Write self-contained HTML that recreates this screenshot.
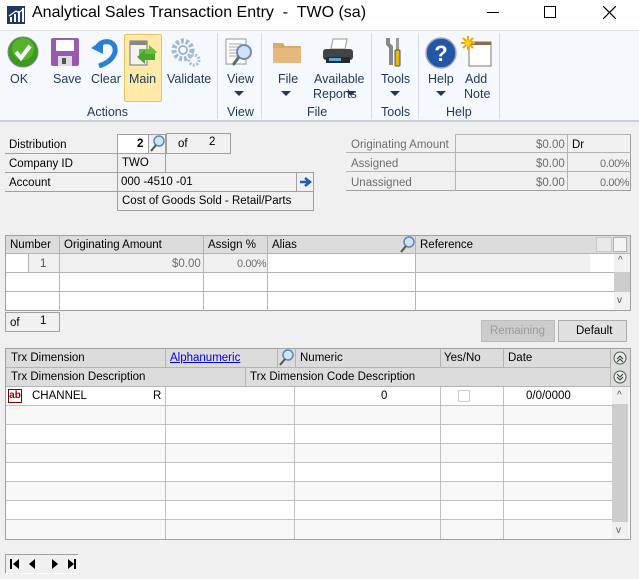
<!DOCTYPE html>
<html><head><meta charset="utf-8"><style>
*{box-sizing:border-box;margin:0;padding:0}
body{width:639px;height:579px;position:relative;overflow:hidden;background:#f0f0f0;font-family:"Liberation Sans",sans-serif;font-size:11.5px;color:#000}
.a{position:absolute}
.t{position:absolute;white-space:nowrap;margin-top:1px}
.b{position:absolute;border:1px solid #a0a0a0}
.rl{font-size:12.5px;color:#1e395b;text-align:center;margin-top:0}
.arr{position:absolute;width:0;height:0;border-left:5px solid transparent;border-right:5px solid transparent;border-top:5px solid #1e395b}
.hd{background:#dcdcdc}
.gl{position:absolute;background:#b4b4b4}
.pc{letter-spacing:-0.4px;font-size:11px}
</style></head><body>
<div class="a" style="left:0;top:0;width:639px;height:30px;background:#fff"></div>
<svg class="a" style="left:7px;top:6px" width="18" height="18"><rect width="18" height="18" fill="#1f3864"/><rect x="3" y="11" width="2" height="5" fill="#fff"/><rect x="7" y="8" width="2" height="8" fill="#fff"/><rect x="11" y="5" width="2" height="11" fill="#fff"/><rect x="15" y="2" width="2" height="14" fill="#fff"/><path d="M2 10 L9 5 L12 7 L17 2" stroke="#fff" stroke-width="1.2" fill="none"/></svg>
<div class="t" style="left:32px;top:4px;font-size:16px;color:#000;margin-top:0">Analytical Sales Transaction Entry&nbsp; -&nbsp; TWO (sa)</div>
<div class="a" style="left:487px;top:12px;width:12px;height:1px;background:#000"></div>
<div class="a" style="left:544px;top:6px;width:12px;height:12px;border:1px solid #000"></div>
<svg class="a" style="left:603px;top:6px" width="13" height="13"><path d="M0 0L13 13M13 0L0 13" stroke="#000" stroke-width="1.2"/></svg>
<div class="a" style="left:0;top:30px;width:639px;height:92px;background:#f5f8fc;border-top:1px solid #dde3ea;border-bottom:2px solid #c9d1da"></div>
<div class="a" style="left:124px;top:34px;width:38px;height:68px;background:#fde9a8;border:1px solid #e8c466;border-radius:2px"></div>
<div class="a" style="left:217px;top:33px;width:1px;height:86px;background:#d5dbe3"></div>
<div class="a" style="left:261px;top:33px;width:1px;height:86px;background:#d5dbe3"></div>
<div class="a" style="left:371px;top:33px;width:1px;height:86px;background:#d5dbe3"></div>
<div class="a" style="left:418px;top:33px;width:1px;height:86px;background:#d5dbe3"></div>
<div class="a" style="left:499px;top:33px;width:1px;height:86px;background:#d5dbe3"></div>
<svg class="a" style="left:7px;top:36px" width="32" height="32"><circle cx="16" cy="16" r="15" fill="#3a9a1c" stroke="#888" stroke-width="1"/><circle cx="16" cy="13" r="11" fill="#6cc437" opacity=".6"/><path d="M9 16l5 6 9-12" stroke="#fff" stroke-width="4" fill="none"/></svg>
<svg class="a" style="left:50px;top:37px" width="30" height="30"><rect x="1" y="1" width="28" height="28" rx="2" fill="#9a59b5"/><rect x="6" y="3" width="18" height="11" fill="#fff"/><rect x="8" y="19" width="14" height="10" fill="#ddd"/><rect x="12" y="21" width="4" height="6" fill="#555"/></svg>
<svg class="a" style="left:91px;top:36px" width="28" height="32"><path d="M6 12 C10 2 26 4 24 16 C22 24 14 28 8 30" stroke="#2a7fd4" stroke-width="5" fill="none"/><path d="M0 12 L12 4 L12 18Z" fill="#2a7fd4"/></svg>
<svg class="a" style="left:129px;top:37px" width="32" height="30"><rect x="1" y="4" width="17" height="24" fill="#f2f2f2" stroke="#777"/><rect x="1" y="4" width="17" height="4" fill="#888"/><path d="M10 12h10v-4l8 7-8 7v-4h-10z" fill="#6bbd3c"/><path d="M26 17h-10v-4l-8 7 8 7v-4h10z" fill="#4aa52a"/></svg>
<svg class="a" style="left:170px;top:37px" width="32" height="30"><circle cx="13" cy="13" r="9" fill="none" stroke="#9fb8d6" stroke-width="5" stroke-dasharray="3 2"/><circle cx="13" cy="13" r="4" fill="#fff" stroke="#9fb8d6" stroke-width="2"/><circle cx="24" cy="23" r="5" fill="none" stroke="#a8bcd3" stroke-width="3" stroke-dasharray="2 1.5"/></svg>
<svg class="a" style="left:224px;top:36px" width="32" height="32"><rect x="2" y="3" width="20" height="25" fill="#fff" stroke="#999"/><path d="M5 8h13M5 11h13M5 14h13M5 17h10M5 20h10" stroke="#aaa"/><circle cx="20" cy="16" r="7" fill="#cfe2f5" stroke="#6b8db5" stroke-width="2"/><path d="M15 21l-6 8" stroke="#666" stroke-width="3"/></svg>
<svg class="a" style="left:272px;top:40px" width="30" height="24"><path d="M1 3h10l2 3h16v17H1z" fill="#d9a96a"/><rect x="1" y="8" width="28" height="15" fill="#e5b97c"/></svg>
<svg class="a" style="left:320px;top:37px" width="36" height="30"><path d="M13 2h14l-2 10H11z" fill="#fff" stroke="#999"/><rect x="3" y="12" width="30" height="11" rx="3" fill="#444"/><rect x="6" y="20" width="24" height="6" fill="#2a2a2a"/><rect x="9" y="21" width="12" height="3" fill="#58a8e0"/></svg>
<svg class="a" style="left:384px;top:36px" width="22" height="32"><path d="M4 2v6l3 3v18" stroke="#888" stroke-width="4" fill="none"/><rect x="12" y="2" width="3" height="12" fill="#999"/><rect x="11" y="14" width="5" height="16" rx="1" fill="#e6b800" stroke="#555"/></svg>
<svg class="a" style="left:425px;top:37px" width="32" height="32"><circle cx="16" cy="16" r="15" fill="#2456a8" stroke="#aab" stroke-width="1.5"/><text x="16" y="24" font-family="Liberation Sans" font-size="22" font-weight="bold" fill="#fff" text-anchor="middle">?</text></svg>
<svg class="a" style="left:461px;top:36px" width="32" height="32"><rect x="8" y="6" width="22" height="24" fill="#fff" stroke="#8b7765"/><rect x="8" y="6" width="22" height="3" fill="#8b6a4f"/><path d="M7 0v14M0 7h14M2 2l10 10M12 2L2 12" stroke="#f5a300" stroke-width="2"/><circle cx="7" cy="7" r="3" fill="#ffd200"/></svg>
<div class="t rl" style="left:10px;top:72px">OK</div>
<div class="t rl" style="left:53px;top:72px">Save</div>
<div class="t rl" style="left:91px;top:72px">Clear</div>
<div class="t rl" style="left:129px;top:72px">Main</div>
<div class="t rl" style="left:167px;top:72px">Validate</div>
<div class="t rl" style="left:227px;top:72px">View</div>
<div class="arr" style="left:234px;top:91px"></div>
<div class="t rl" style="left:278px;top:72px">File</div>
<div class="arr" style="left:281px;top:91px"></div>
<div class="t rl" style="left:314px;top:72px">Available</div>
<div class="t rl" style="left:313px;top:87px">Reports</div>
<div class="arr" style="left:346px;top:91px"></div>
<div class="t rl" style="left:381px;top:72px">Tools</div>
<div class="arr" style="left:390px;top:91px"></div>
<div class="t rl" style="left:428px;top:72px">Help</div>
<div class="arr" style="left:436px;top:91px"></div>
<div class="t rl" style="left:465px;top:72px">Add</div>
<div class="t rl" style="left:464px;top:87px">Note</div>
<div class="t rl" style="left:87px;top:105px">Actions</div>
<div class="t rl" style="left:227px;top:105px">View</div>
<div class="t rl" style="left:307px;top:105px">File</div>
<div class="t rl" style="left:381px;top:105px">Tools</div>
<div class="t rl" style="left:446px;top:105px">Help</div>
<div class="b" style="left:5px;top:135px;width:113px;height:19px;border-top:none;border-left:none"></div>
<div class="t" style="left:9px;top:138px">Distribution</div>
<div class="b" style="left:5px;top:154px;width:113px;height:19px;border-top:none;border-left:none"></div>
<div class="t" style="left:9px;top:157px">Company ID</div>
<div class="b" style="left:5px;top:173px;width:113px;height:19px;border-top:none;border-left:none"></div>
<div class="t" style="left:9px;top:176px">Account</div>
<div class="b" style="left:117px;top:134px;width:32px;height:20px;background:#fff"></div>
<div class="t" style="left:137px;top:137px;font-weight:bold">2</div>
<div class="b" style="left:148px;top:134px;width:18px;height:20px;background:#f0f0f0"></div>
<svg class="a" style="left:150px;top:135px" width="15" height="17"><circle cx="9" cy="6" r="5" fill="#cfe4f7" stroke="#5f86b8" stroke-width="1.5"/><path d="M6 10l-5 6" stroke="#555" stroke-width="2"/></svg>
<div class="b" style="left:166px;top:133px;width:65px;height:21px"></div>
<div class="t" style="left:178px;top:137px">of</div>
<div class="t" style="left:209px;top:135px">2</div>
<div class="b" style="left:117px;top:153px;width:49px;height:20px"></div>
<div class="t" style="left:122px;top:156px">TWO</div>
<div class="b" style="left:117px;top:172px;width:197px;height:20px"></div>
<div class="t" style="left:121px;top:175px;color:#000">000 -4510 -01</div>
<div class="b" style="left:296px;top:172px;width:18px;height:20px"></div>
<svg class="a" style="left:299px;top:176px" width="13" height="12"><path d="M1 6h8M6 2l5 4-5 4" stroke="#1e5fb4" stroke-width="2.5" fill="none"/></svg>
<div class="b" style="left:117px;top:191px;width:197px;height:20px"></div>
<div class="t" style="left:122px;top:194px">Cost of Goods Sold - Retail/Parts</div>
<div class="b" style="left:346px;top:134px;width:285px;height:57px;border-top:none;border-left:none"></div>
<div class="gl" style="left:346px;top:152px;width:285px;height:1px"></div>
<div class="gl" style="left:346px;top:171px;width:285px;height:1px"></div>
<div class="gl" style="left:455px;top:134px;width:1px;height:57px"></div>
<div class="gl" style="left:567px;top:134px;width:1px;height:57px"></div>
<div class="gl" style="left:455px;top:134px;width:176px;height:1px"></div>
<div class="t" style="left:351px;top:138px;color:#6d6d6d">Originating Amount</div>
<div class="t" style="left:351px;top:157px;color:#6d6d6d">Assigned</div>
<div class="t" style="left:351px;top:176px;color:#6d6d6d">Unassigned</div>
<div class="t" style="left:536px;top:138px;color:#6d6d6d">$0.00</div>
<div class="t" style="left:536px;top:157px;color:#6d6d6d">$0.00</div>
<div class="t" style="left:536px;top:176px;color:#6d6d6d">$0.00</div>
<div class="t" style="left:572px;top:138px">Dr</div>
<div class="t pc" style="left:600px;top:157px;color:#6d6d6d">0.00%</div>
<div class="t pc" style="left:600px;top:176px;color:#6d6d6d">0.00%</div>
<div class="b" style="left:5px;top:235px;width:626px;height:76px;background:#fff"></div>
<div class="a hd" style="left:6px;top:236px;width:624px;height:18px"></div>
<div class="a" style="left:6px;top:254px;width:608px;height:19px;background:#f0f0f0"></div>
<div class="a" style="left:6px;top:254px;width:22px;height:19px;background:#fff"></div>
<div class="a" style="left:268px;top:254px;width:147px;height:19px;background:#fff"></div>
<div class="a" style="left:590px;top:254px;width:24px;height:19px;background:#fff"></div>
<div class="gl" style="left:6px;top:253px;width:624px;height:1px"></div>
<div class="gl" style="left:6px;top:272px;width:608px;height:1px"></div>
<div class="gl" style="left:6px;top:291px;width:608px;height:1px"></div>
<div class="gl" style="left:59px;top:236px;width:1px;height:74px"></div>
<div class="gl" style="left:28px;top:254px;width:1px;height:19px"></div>
<div class="gl" style="left:203px;top:236px;width:1px;height:74px"></div>
<div class="gl" style="left:267px;top:236px;width:1px;height:74px"></div>
<div class="gl" style="left:415px;top:236px;width:1px;height:74px"></div>
<div class="t" style="left:10px;top:238px">Number</div>
<div class="t" style="left:64px;top:238px">Originating Amount</div>
<div class="t" style="left:208px;top:238px">Assign %</div>
<div class="t" style="left:272px;top:238px">Alias</div>
<svg class="a" style="left:400px;top:236px" width="15" height="17"><circle cx="9" cy="6" r="5" fill="#cfe4f7" stroke="#5f86b8" stroke-width="1.5"/><path d="M6 10l-5 6" stroke="#555" stroke-width="2"/></svg>
<div class="t" style="left:420px;top:238px">Reference</div>
<div class="a" style="left:596px;top:237px;width:16px;height:15px;border:1px solid #c8c8c8;background:#e8e8e8"></div>
<div class="a" style="left:613px;top:237px;width:14px;height:15px;border:1px solid #b0b0b0;background:#f4f4f4"></div>
<div class="t" style="left:40px;top:257px;color:#555">1</div>
<div class="t" style="left:172px;top:257px;color:#6d6d6d">$0.00</div>
<div class="t pc" style="left:237px;top:257px;color:#6d6d6d">0.00%</div>
<div class="a" style="left:614px;top:254px;width:16px;height:56px;background:#f0f0f0"></div>
<div class="a" style="left:614px;top:272px;width:16px;height:20px;background:#cdcdcd"></div>
<div class="t" style="left:618px;top:254px;font-size:10px;color:#555">^</div>
<div class="t" style="left:617px;top:294px;font-size:10px;color:#555">v</div>
<div class="b" style="left:5px;top:312px;width:55px;height:20px"></div>
<div class="t" style="left:10px;top:316px">of</div>
<div class="t" style="left:40px;top:314px">1</div>
<div class="b" style="left:481px;top:320px;width:74px;height:22px;background:#cccccc;border-color:#bcbcbc"></div>
<div class="t" style="left:490px;top:324px;color:#9a9a9a">Remaining</div>
<div class="b" style="left:558px;top:320px;width:69px;height:22px;background:#e1e1e1;border-color:#adadad"></div>
<div class="t" style="left:576px;top:324px">Default</div>
<div class="b" style="left:5px;top:348px;width:626px;height:192px;background:#fff"></div>
<div class="a hd" style="left:6px;top:349px;width:624px;height:37px"></div>
<div class="gl" style="left:6px;top:367px;width:604px;height:1px"></div>
<div class="gl" style="left:6px;top:386px;width:624px;height:1px"></div>
<div class="gl" style="left:165px;top:349px;width:1px;height:18px"></div>
<div class="gl" style="left:277px;top:349px;width:1px;height:18px"></div>
<div class="gl" style="left:295px;top:349px;width:1px;height:18px"></div>
<div class="gl" style="left:440px;top:349px;width:1px;height:18px"></div>
<div class="gl" style="left:503px;top:349px;width:1px;height:18px"></div>
<div class="gl" style="left:245px;top:368px;width:1px;height:18px"></div>
<div class="gl" style="left:610px;top:349px;width:1px;height:37px"></div>
<div class="t" style="left:11px;top:351px">Trx Dimension</div>
<div class="t" style="left:170px;top:351px;color:#0000ee;text-decoration:underline">Alphanumeric</div>
<svg class="a" style="left:279px;top:349px" width="15" height="17"><circle cx="9" cy="6" r="5" fill="#cfe4f7" stroke="#5f86b8" stroke-width="1.5"/><path d="M6 10l-5 6" stroke="#555" stroke-width="2"/></svg>
<div class="t" style="left:300px;top:351px">Numeric</div>
<div class="t" style="left:444px;top:351px">Yes/No</div>
<div class="t" style="left:508px;top:351px">Date</div>
<div class="t" style="left:11px;top:370px">Trx Dimension Description</div>
<div class="t" style="left:250px;top:370px">Trx Dimension Code Description</div>
<svg class="a" style="left:613px;top:350px" width="14" height="16"><circle cx="7" cy="8" r="6" fill="#e8f0e8" stroke="#555"/><path d="M4 9l3-3 3 3M4 12l3-3 3 3" stroke="#333" fill="none"/></svg>
<svg class="a" style="left:613px;top:369px" width="14" height="16"><circle cx="7" cy="8" r="6" fill="#e8f0e8" stroke="#555"/><path d="M4 5l3 3 3-3M4 8l3 3 3-3" stroke="#333" fill="none"/></svg>
<div class="a" style="left:6px;top:406px;width:606px;height:18px;background:#f7f8f7"></div>
<div class="a" style="left:6px;top:444px;width:606px;height:18px;background:#f7f8f7"></div>
<div class="a" style="left:6px;top:482px;width:606px;height:18px;background:#f7f8f7"></div>
<div class="a" style="left:6px;top:520px;width:606px;height:19px;background:#f7f8f7"></div>
<div class="gl" style="left:6px;top:405px;width:606px;height:1px;background:#c0c0c0"></div>
<div class="gl" style="left:6px;top:424px;width:606px;height:1px;background:#c0c0c0"></div>
<div class="gl" style="left:6px;top:443px;width:606px;height:1px;background:#c0c0c0"></div>
<div class="gl" style="left:6px;top:462px;width:606px;height:1px;background:#c0c0c0"></div>
<div class="gl" style="left:6px;top:481px;width:606px;height:1px;background:#c0c0c0"></div>
<div class="gl" style="left:6px;top:500px;width:606px;height:1px;background:#c0c0c0"></div>
<div class="gl" style="left:6px;top:519px;width:606px;height:1px;background:#c0c0c0"></div>
<div class="gl" style="left:165px;top:387px;width:1px;height:152px;background:#c0c0c0"></div>
<div class="gl" style="left:294px;top:387px;width:1px;height:152px;background:#c0c0c0"></div>
<div class="gl" style="left:440px;top:387px;width:1px;height:152px;background:#c0c0c0"></div>
<div class="gl" style="left:503px;top:387px;width:1px;height:152px;background:#c0c0c0"></div>
<div class="a" style="left:8px;top:389px;width:14px;height:14px;border:1px solid #7a0000;background:#fff;color:#8b0000;font-size:10px;font-weight:bold;line-height:12px;text-align:center">ab</div>
<div class="t" style="left:32px;top:389px">CHANNEL</div>
<div class="t" style="left:153px;top:389px">R</div>
<div class="t" style="left:381px;top:389px">0</div>
<div class="a" style="left:458px;top:390px;width:12px;height:12px;border:1px solid #ccc"></div>
<div class="t" style="left:526px;top:389px">0/0/0000</div>
<div class="a" style="left:612px;top:387px;width:17px;height:152px;background:#f0f0f0"></div>
<div class="a" style="left:612px;top:404px;width:16px;height:118px;background:#cdcdcd"></div>
<div class="t" style="left:617px;top:389px;font-size:10px;color:#555">^</div>
<div class="t" style="left:616px;top:524px;font-size:10px;color:#555">v</div>
<div class="a" style="left:5px;top:554px;width:74px;height:20px;border:1px solid #a0a0a0;border-right-color:#fff;border-bottom-color:#fff"></div>
<svg class="a" style="left:10px;top:558px" width="66" height="12"><path d="M1 1v10" stroke="#000" stroke-width="2"/><path d="M9 1L3 6l6 5z"/><path d="M25 1l-6 5 6 5z"/><path d="M42 1l6 5-6 5z"/><path d="M58 1l6 5-6 5z"/><path d="M65 1v10" stroke="#000" stroke-width="2"/></svg>
</body></html>
